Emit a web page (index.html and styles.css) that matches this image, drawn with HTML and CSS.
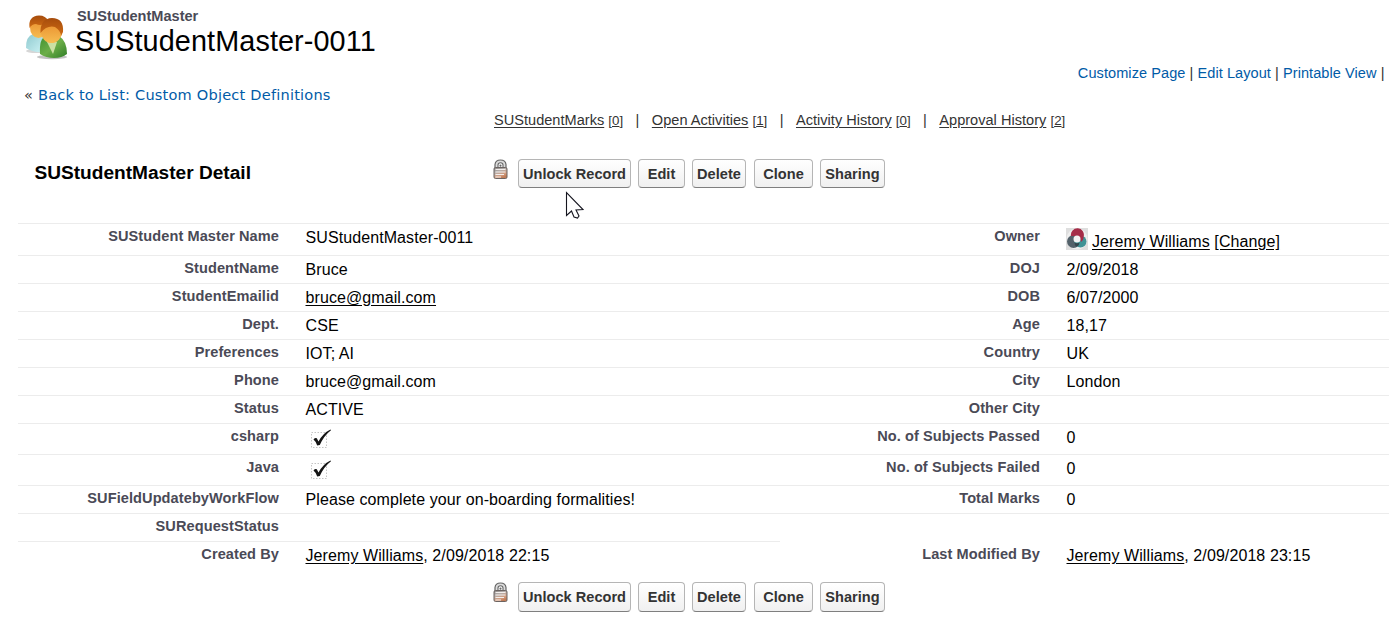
FILE: index.html
```html
<!DOCTYPE html>
<html lang="en">
<head>
<meta charset="utf-8">
<title>SUStudentMaster-0011</title>
<link rel="stylesheet" href="styles.css">
</head>
<body>
<svg class="defs" width="0" height="0">
  <defs>
    <linearGradient id="lockBody" x1="0" y1="0" x2=".5" y2="1"><stop offset="0" stop-color="#8a8685"/><stop offset=".4" stop-color="#b5aeab"/><stop offset=".8" stop-color="#d39a7b"/><stop offset="1" stop-color="#c07c58"/></linearGradient>
    <linearGradient id="face" x1="0" y1="0" x2="0" y2="1"><stop offset="0" stop-color="#e88a2a"/><stop offset="1" stop-color="#f6bd52"/></linearGradient>
    <linearGradient id="hair" x1="0" y1="0" x2="0" y2="1"><stop offset="0" stop-color="#a64c0c"/><stop offset="1" stop-color="#cf6c14"/></linearGradient>
    <linearGradient id="green" x1="0" y1="0" x2="1" y2="1"><stop offset="0" stop-color="#3f9132"/><stop offset=".5" stop-color="#6cae48"/><stop offset="1" stop-color="#2f7d27"/></linearGradient>
    <linearGradient id="aqua" x1="0" y1="0" x2="1" y2="1"><stop offset="0" stop-color="#8fc9cf"/><stop offset="1" stop-color="#cdf3f5"/></linearGradient>
    <symbol id="lock" viewBox="0 0 15 21">
      <path d="M2 11V5.500Q2.500 1 7.500 1T13 5.500V11Z" fill="#dcdcdc" stroke="#666" stroke-width="1.200"/>
      <path d="M5 9V6Q5 3.700 7.500 3.700T10 6V9Z" fill="#fff" stroke="#666" stroke-width="1.100"/>
      <rect x="1" y="8.500" width="13" height="11" rx="1.500" fill="url(#lockBody)" stroke="#6b6462"/>
      <path d="M2.500 10.500H12.500M2.500 13H12.500M2.500 15.500H11M2.500 18H8" stroke="#f3efed" stroke-width="1.200"/>
      <circle cx="7.500" cy="6.700" r="1.100" fill="#666"/>
    </symbol>
    <symbol id="check" viewBox="0 0 22 22">
      <rect x="1.500" y="5.500" width="15" height="15" fill="none" stroke="#c4c4c4" stroke-dasharray="1.500 1.500"/>
      <path d="M3.500 12.500Q5 10.500 6.800 11.200L8.500 14.500Q13 6 20.500 2.500L21 3.200Q14 8.500 9.800 18L7.200 18.500Q6 14.500 3.500 12.500Z" fill="#151515"/>
    </symbol>
  </defs>
</svg>
<header class="header">
  <svg class="people" width="46" height="46" viewBox="0 0 46 46">
    <ellipse cx="28" cy="43" rx="15" ry="2.200" fill="#999" opacity=".6"/>
    <ellipse cx="12" cy="37" rx="10" ry="2" fill="#999" opacity=".4"/>
    <path d="M2 34Q2 22 9 20L20 23L20 38Q9 39 2 34Z" fill="url(#aqua)"/>
    <ellipse cx="14.500" cy="13.500" rx="8.500" ry="10.500" fill="url(#face)"/>
    <path d="M5.500 14Q4 2 15 1.500Q22 1.500 24 7Q18 13 12 10Q8 10 5.500 14Z" fill="url(#hair)"/>
    <path d="M16 40Q15 24 22 22L35 22Q43 27 43 40Q38 44 30 44T16 40Z" fill="url(#green)"/>
    <path d="M23 28L29 40L33 28Z" fill="#e4eebc" opacity=".8"/>
    <ellipse cx="27.500" cy="17.500" rx="10.500" ry="11.500" fill="url(#face)"/>
    <path d="M16.500 19Q16 4.500 28 4Q40 4 39 18Q38 20 37 22Q37 17 31 13Q23 11 16.500 19Z" fill="url(#hair)"/>
  </svg>
  <div class="titles"><div class="type">SUStudentMaster</div><h1 class="title">SUStudentMaster-0011</h1></div>
</header>
<div class="tools"><a>Customize Page</a> | <a>Edit Layout</a> | <a>Printable View</a> |</div>
<div class="back">« <a>Back to List: Custom Object Definitions</a></div>
<nav class="related">
  <span><a>SUStudentMarks</a> <small>[<u>0</u>]</small></span><i>|</i>
  <span><a>Open Activities</a> <small>[<u>1</u>]</small></span><i>|</i>
  <span><a>Activity History</a> <small>[<u>0</u>]</small></span><i>|</i>
  <span><a>Approval History</a> <small>[<u>2</u>]</small></span>
</nav>
<div class="bar">
  <h2 class="heading">SUStudentMaster Detail</h2>
  <svg class="lock" width="15" height="21"><use href="#lock"/></svg>
  <div class="buttons"><button class="b1">Unlock Record</button><button class="b2">Edit</button><button class="b3">Delete</button><button class="b4">Clone</button><button class="b5">Sharing</button></div>
  <svg class="cursor" width="19" height="28" viewBox="0 0 19 28"><path d="M1.500 1.500V24.500L6.500 20L9 26L12.500 27L14 25L11 19L18 18.500Z" fill="#fff" stroke="#15151f" stroke-width="1.100"/></svg>
</div>
<main class="details">
  <div class="row first"><b>SUStudent Master Name</b><p>SUStudentMaster-0011</p><b>Owner</b><p class="owner"><svg width="22" height="22" viewBox="0 0 22 22"><rect width="22" height="22" fill="#dedede"/><circle cx="11" cy="11" r="10.500" fill="#eee"/><circle cx="7.500" cy="13.500" r="6.500" fill="#53616a"/><circle cx="14.500" cy="13.500" r="6" fill="#3f9295"/><path d="M5 8A6.500 6.500 0 1 1 17.500 9Q18 12 15 14Q14 9 11 8Q7 8 5 8Z" fill="#a52d48"/><circle cx="11" cy="11" r="3.500" fill="#f2f2f2"/><path d="M8.500 14.500Q11 16 13.500 14.500Q13 18 11 18.500T8.500 14.500" fill="#34464d"/></svg><span><a>Jeremy Williams</a> <a>[Change]</a></span></p></div>
  <div class="row"><b>StudentName</b><p>Bruce</p><b>DOJ</b><p>2/09/2018</p></div>
  <div class="row"><b>StudentEmailid</b><p><a>bruce@gmail.com</a></p><b>DOB</b><p>6/07/2000</p></div>
  <div class="row"><b>Dept.</b><p>CSE</p><b>Age</b><p>18,17</p></div>
  <div class="row"><b>Preferences</b><p>IOT; AI</p><b>Country</b><p>UK</p></div>
  <div class="row"><b>Phone</b><p>bruce@gmail.com</p><b>City</b><p>London</p></div>
  <div class="row"><b>Status</b><p>ACTIVE</p><b>Other City</b><p></p></div>
  <div class="row tall"><b>csharp</b><p><svg class="check" width="22" height="22"><use href="#check"/></svg></p><b>No. of Subjects Passed</b><p>0</p></div>
  <div class="row tall"><b>Java</b><p><svg class="check" width="22" height="22"><use href="#check"/></svg></p><b>No. of Subjects Failed</b><p>0</p></div>
  <div class="row"><b>SUFieldUpdatebyWorkFlow</b><p>Please complete your on-boarding formalities!</p><b>Total Marks</b><p>0</p></div>
  <div class="row half"><b>SURequestStatus</b><p></p></div>
  <div class="row last"><b>Created By</b><p><a>Jeremy Williams</a>, 2/09/2018 22:15</p><b>Last Modified By</b><p><a>Jeremy Williams</a>, 2/09/2018 23:15</p></div>
</main>
<div class="bar bottom">
  <svg class="lock" width="15" height="21"><use href="#lock"/></svg>
  <div class="buttons"><button class="b1">Unlock Record</button><button class="b2">Edit</button><button class="b3">Delete</button><button class="b4">Clone</button><button class="b5">Sharing</button></div>
</div>
</body>
</html>
```
FILE: styles.css
```css
* { box-sizing: border-box; }
body { margin: 0; width: 1389px; height: 619px; overflow: hidden; background: #fff; color: #000; font: 16px/18px "Liberation Sans", Arial, sans-serif; }
h1, h2, p { margin: 0; }
.defs { display: block; }
.header { display: flex; height: 64px; padding: 8px 0 0 24px; }
.people { margin-top: 6px; }
.titles { padding-left: 6px; }
.type { padding-left: 1px; font-size: 14.56px; font-weight: bold; line-height: 17px; color: #4a4a56; }
.title { font-size: 28.8px; letter-spacing: .1px; font-weight: normal; line-height: 32px; margin-left: -1px; }
.tools { height: 21px; padding-right: 4.500px; text-align: right; font-size: 14.56px; letter-spacing: .06px; line-height: 18px; color: #333; }
.tools a, .back a { color: #015ba7; }
.back { height: 24px; padding-left: 24px; font: 14.56px/20px "DejaVu Sans", Verdana, sans-serif; letter-spacing: .21px; color: #333; }
.related { display: flex; height: 50px; padding: 2px 0 0 494px; font-size: 14.56px; letter-spacing: .02px; color: #333; }
.related a, .row a { text-decoration: underline; }
.related a { text-underline-offset: 2px; }
.related small { font-size: 13.300px; }
.related i { width: 28.700px; text-align: center; font-style: normal; }
.bar { position: relative; display: flex; height: 64px; }
.heading { width: 494px; padding: 4px 0 0 34.500px; font-size: 19.1px; line-height: 20px; }
.lock { flex: none; margin-left: -1px; }
.buttons { display: flex; padding-left: 10px; }
.buttons button { height: 29px; padding: 0; border: 1px solid #b5b5b5; border-bottom-color: #7f7f7f; border-radius: 4px; background: linear-gradient(#fff, #f0f0f0); color: #333; font: bold 14.56px/18px "Liberation Sans", Arial, sans-serif; letter-spacing: .03px; }
.b1 { width: 113px; margin-right: 7px; }
.b2 { width: 47px; margin-right: 7px; }
.b3 { width: 54px; margin-right: 8px; }
.b4 { width: 59px; margin-right: 7px; }
.b5 { width: 65px; }
.cursor { position: absolute; left: 565px; top: 32px; }
.details { margin-left: 18px; border-top: 1px solid #ececec; }
.row { display: grid; grid-template-columns: 261px 500px 261px 349px; height: 28px; border-bottom: 1px solid #ececec; }
.row b { padding-top: 3px; text-align: right; font-size: 14.56px; letter-spacing: .09px; line-height: 18px; color: #4a4a56; }
.row p { padding: 5px 0 0 26.500px; letter-spacing: .09px; white-space: nowrap; }
.row a { text-underline-offset: 2px; }
.first { height: 32px; }
.row.first .owner { display: flex; padding: 4px 0 0 26px; }
.owner span { padding: 5px 0 0 4px; }
.tall { height: 31px; }
.row .check { display: block; margin: -2px 0 0 4px; }
.half { width: 762px; }
.last { height: 40px; border: 0; }
.bottom { padding-left: 494px; height: 36px; }
.bottom .buttons button { height: 30px; }
```
